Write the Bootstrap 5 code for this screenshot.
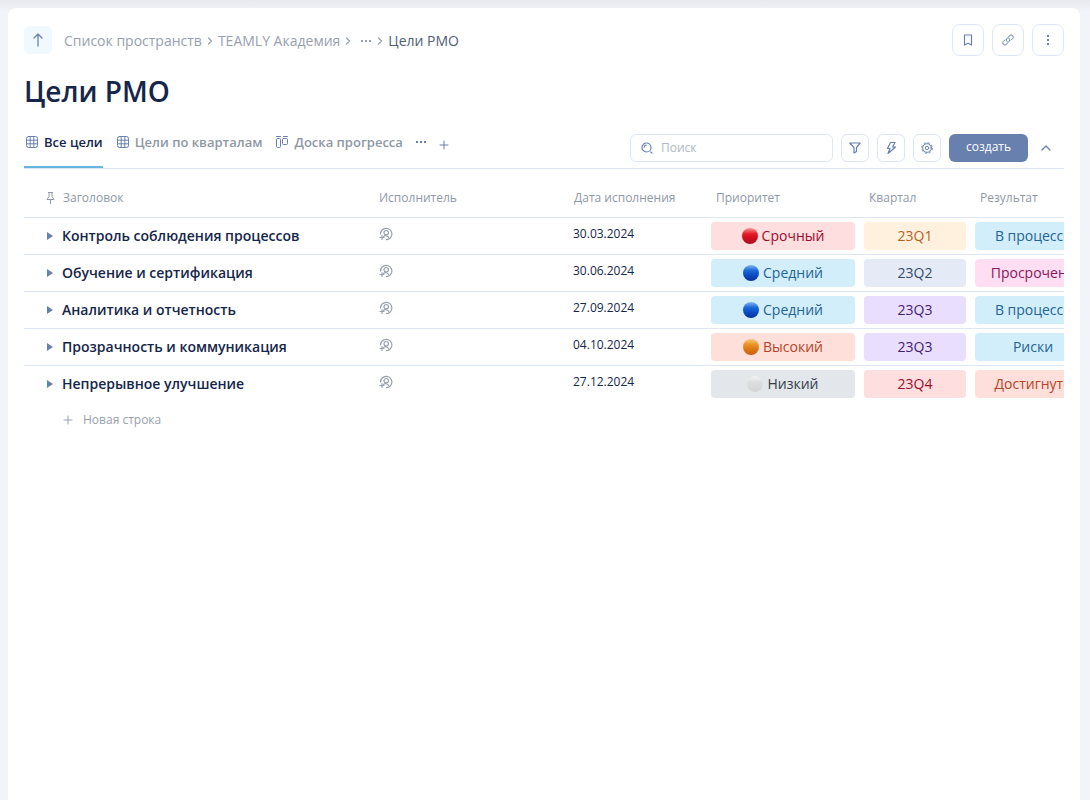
<!DOCTYPE html>
<html lang="ru">
<head>
<meta charset="utf-8">
<meta name="viewport" content="width=device-width, initial-scale=1">
<title>Цели РМО</title>
<link href="https://cdn.jsdelivr.net/npm/bootstrap@5.3.0/dist/css/bootstrap.min.css" rel="stylesheet">
<style>
  :root { --ink: #15264a; --muted-ink: #98a0ae; --accent: #6780ae; --line: #dce6f4; }
  body { background: #f3f4f9; font-family: "Open Sans", "Noto Sans", sans-serif; color: var(--ink); }
  .page-shell { padding: 8px 10px 0 8px; background: linear-gradient(#e8e9ee, #f3f4f9) 0 0 / 100% 12px no-repeat; }
  .sheet { background: #fff; border-radius: 8px 8px 0 0; padding: 16px; }
  svg { display: block; fill: none; stroke: currentColor; stroke-linecap: round; stroke-linejoin: round; flex: none; }
  .up-link { width: 28px; height: 28px; border-radius: 6px; background: #f0f9ff; }
  .crumbs { font-size: 14px; line-height: 20px; color: var(--muted-ink); }
  .crumbs a, .crumbs button { color: var(--muted-ink); text-decoration: none; }
  .crumbs a.up-link { color: var(--accent); }
  .crumb-row { padding-top: 2px; }
  .crumbs .here { color: #4f5d77; }
  .bare { border: 0; background: none; padding: 0; color: var(--accent); }
  .tool { border: 1px solid var(--line); background: #fff; color: var(--accent); padding: 0; width: 28px; height: 28px; border-radius: 6px; }
  .tool-lg { width: 32px; height: 32px; border-radius: 8px; }
  h1 { font-weight: 600; font-size: 28px; line-height: 38px; margin: 16px 0 18px; }
  .toolbar { border-bottom: 1px solid var(--line); height: 41px; }
  .views { gap: 12px; }
  .view-tab { gap: 6px; padding-left: 2px; font-size: 13px; line-height: 28px; font-weight: 600; color: #8f98a6; text-decoration: none; height: 40px; border-bottom: 2px solid transparent; }
  .view-tab.active { color: var(--ink); border-color: #66b5dd; }
  .view-tab svg { color: var(--accent); }
  .search-box { width: 203px; height: 28px; border: 1px solid var(--line); border-radius: 6px; padding: 0 10px; color: var(--accent); }
  .search-box input { border: 0; outline: 0; min-width: 0; padding: 0; font-size: 12px; line-height: 20px; color: var(--ink); }
  .search-box input::placeholder { color: #aeb7c3; opacity: 1; }
  .create { width: 79px; height: 28px; border: 0; border-radius: 6px; background: var(--accent); color: #fff; font-size: 12px; line-height: 20px; font-weight: 500; padding: 0 0 2px; }
  .goals { table-layout: fixed; width: 1072px; margin: 0; border-collapse: separate; border-spacing: 0; }
  .goals th, .goals td { padding: 0; vertical-align: middle; }
  .goals thead th { height: 49px; padding: 10px 9px 0; font-size: 12px; line-height: 18px; font-weight: 400; color: #8f98a6; border-bottom: 1px solid var(--line); }
  .goals tbody td, .goals tbody th { height: 37px; border-bottom: 1px solid var(--line); }
  .goals tbody tr:last-child > * { border-color: transparent; }
  .goals thead th:first-child, .goals tbody th { padding-left: 22px; }
  .goals tbody th { font-size: 14px; line-height: 20px; font-weight: 600; }
  .goals .who { padding: 0 9px 4px; color: #98a0ae; }
  .goals .due { padding: 0 8px 4px; font-size: 12px; line-height: 18px; }
  .goals .pick { padding: 0 5px 0 4px; }
  .pill { height: 28px; border-radius: 4px; font-size: 14px; line-height: 20px; display: flex; align-items: center; justify-content: center; gap: 4px; }
  .p-red { background: #ffdedf; color: #9d0b2c; }
  .p-blue { background: #d2eefb; color: #246491; }
  .p-coral { background: #ffdfda; color: #b54327; }
  .p-gray { background: #e3e7eb; color: #333f4a; }
  .p-cream { background: #fff1de; color: #b65f20; }
  .p-slate { background: #e4eaf6; color: #334a6b; }
  .p-violet { background: #e9defe; color: #432272; }
  .p-pink { background: #ffdef3; color: #8a1558; }
  .ball { width: 16px; height: 16px; border-radius: 50%; }
  .b-red { background: linear-gradient(#f69a95, #e5202c 35%, #d20e1e 60%, #a90f20); }
  .b-blue { background: linear-gradient(#80b5ee, #1c67d8 35%, #0d4fc8 60%, #0a2f9e); }
  .b-orange { background: linear-gradient(#f8c878, #ea9426 35%, #de7b14 60%, #c75e0e); }
  .b-white { background: linear-gradient(#f3f3f3, #dcdddf 40%, #d4d5d6); }
  .new-row { gap: 10px; font-size: 12px; line-height: 18px; color: #98a0ae; padding: 8px 0 0 39px; }
</style>
</head>
<body>
<svg width="0" height="0" class="position-absolute" aria-hidden="true">
  <symbol id="grid" viewBox="0 0 12 12"><rect x=".5" y=".5" width="11" height="11" rx="2"/><path d="M.5 4.2h11M.5 7.8h11M4.2.5v11M7.8.5v11"/></symbol>
  <symbol id="person" viewBox="0 0 14 14"><path d="M1.500 7A5.700 5.700 0 1 1 7.500 12.700M1 10.500h4M3 8.500v4" stroke-width="1.200"/><circle cx="7.200" cy="5.700" r="2.200" stroke-width="1.200"/><path d="M4.600 9.500C5.500 8.200 9 8.200 10 11.200" stroke-width="1.200"/></symbol>
  <symbol id="next" viewBox="0 0 8 8"><path d="M2.500 1l3 3-3 3" stroke-width="1.300"/></symbol>
  <symbol id="dots" viewBox="0 0 12 4"><path d="M1 1h2v2H1zM5 1h2v2H5zM9 1h2v2H9z" fill="currentColor" stroke="none"/></symbol>
  <symbol id="plus" viewBox="0 0 10 10"><path d="M5 1v8M1 5h8"/></symbol>
  <symbol id="open" viewBox="0 0 8 8"><path d="M1 0l6 4-6 4z" fill="currentColor" stroke="none"/></symbol>
</svg>
<div class="page-shell d-flex min-vh-100">
<main class="sheet flex-grow-1 overflow-hidden">
  <header class="d-flex align-items-center justify-content-between">
    <nav class="crumbs d-flex align-items-center" aria-label="Путь">
      <a href="#" class="up-link d-flex align-items-center justify-content-center me-2" aria-label="Вверх"><svg width="12" height="14" viewBox="0 0 12 14" stroke-width="1.3"><path d="M6 13V1M2 5l4-4 4 4"/></svg></a>
      <div class="crumb-row d-flex align-items-center ms-1">
      <a href="#">Список пространств</a>
      <svg class="mx-1" width="8" height="8"><use href="#next"/></svg>
      <a href="#">TEAMLY Академия</a>
      <svg class="ms-1" width="8" height="8"><use href="#next"/></svg>
      <button class="bare ms-1 px-1" aria-label="Ещё уровни"><svg width="12" height="4"><use href="#dots"/></svg></button>
      <svg class="me-1" width="8" height="8"><use href="#next"/></svg>
      <span class="here">Цели РМО</span>
      </div>
    </nav>
    <div class="d-flex gap-2">
      <button class="tool tool-lg d-flex align-items-center justify-content-center" aria-label="В закладки"><svg width="10" height="12" viewBox="0 0 10 12"><path d="M1.500 1h7v10L5 9.200 1.500 11z" stroke-width="1.200"/></svg></button>
      <button class="tool tool-lg d-flex align-items-center justify-content-center" aria-label="Ссылка"><svg width="12" height="12" viewBox="0 0 12 12"><path d="M5 7.600a2.200 2.200 0 0 1 0-3L7.600 1.600a2.100 2.100 0 0 1 3 3L9 6.200M7 4.400a2.200 2.200 0 0 1 0 3L4.400 10.400a2.100 2.100 0 0 1-3-3L3 5.800"/></svg></button>
      <button class="tool tool-lg d-flex align-items-center justify-content-center" aria-label="Меню"><svg width="2" height="10" viewBox="0 0 2 10"><path d="M0 0h2v2H0zM0 4h2v2H0zM0 8h2v2H0z" fill="currentColor" stroke="none"/></svg></button>
    </div>
  </header>

  <h1>Цели РМО</h1>

  <div class="toolbar d-flex justify-content-between">
    <nav class="views d-flex" aria-label="Представления">
      <a href="#" class="view-tab active d-flex" aria-current="page"><svg class="mt-2" width="12" height="12"><use href="#grid"/></svg>Все цели</a>
      <a href="#" class="view-tab d-flex"><svg class="mt-2" width="12" height="12"><use href="#grid"/></svg>Цели по кварталам</a>
      <a href="#" class="view-tab d-flex"><svg class="mt-2" width="12" height="12" viewBox="0 0 12 12"><path d="M.5.5h4M7.500.5h4"/><rect x=".5" y="2.500" width="4" height="9" rx="1"/><rect x="6.500" y="2.500" width="5" height="6" rx="1"/></svg>Доска прогресса</a>
      <button class="bare align-self-start mt-2 py-1" aria-label="Ещё"><svg width="12" height="4"><use href="#dots"/></svg></button>
      <button class="bare align-self-start mt-2 pt-1" aria-label="Добавить представление"><svg width="10" height="10"><use href="#plus"/></svg></button>
    </nav>
    <div class="d-flex gap-2 align-items-center">
      <label class="search-box d-flex align-items-center gap-2"><svg width="12" height="12" viewBox="0 0 12 12" stroke-width="1.200"><circle cx="5.500" cy="5.500" r="4.500"/><path d="M9.800 10l1.200 1.200M3.200 5.200a2.200 2.200 0 0 1 2-2"/></svg><input class="flex-grow-1" type="search" placeholder="Поиск" aria-label="Поиск"></label>
      <button class="tool d-flex align-items-center justify-content-center" aria-label="Фильтр"><svg width="12" height="12" viewBox="0 0 12 12" stroke-width="1.200"><path d="M.8 1h10.400L7.500 5.500v4L5 11V5.500z"/></svg></button>
      <button class="tool d-flex align-items-center justify-content-center" aria-label="Автоматизация"><svg width="12" height="14" viewBox="0 0 12 14" stroke-width="1.200"><path d="M5.500 1.500L2.500 7.500H5L3 12.500 10.500 6H7.500L10 1.500z"/></svg></button>
      <button class="tool d-flex align-items-center justify-content-center" aria-label="Настройки"><svg width="12" height="12" viewBox="0 0 12 12"><circle cx="6" cy="6" r="4.300"/><circle cx="6" cy="6" r="5.300" stroke-dasharray="2.160 2" stroke-linecap="butt"/><circle cx="6" cy="6" r="1.700"/></svg></button>
      <button class="create">создать</button>
      <button class="bare px-1 me-2" aria-label="Свернуть"><svg width="12" height="8" viewBox="0 0 12 8" stroke-width="1.300"><path d="M2 6l4-4 4 4"/></svg></button>
    </div>
  </div>

  <div class="overflow-hidden">
  <table class="goals">
    <colgroup><col style="width:346px"><col style="width:195px"><col style="width:142px"><col style="width:153px"><col style="width:111px"><col style="width:125px"></colgroup>
    <thead><tr>
      <th scope="col"><span class="d-flex align-items-center gap-2"><svg width="9" height="12" viewBox="0 0 9 12"><path d="M2.500.5h4M3 .5v4L1 7.500h7L6 4.500v-4M4.500 7.500v4"/></svg>Заголовок</span></th>
      <th scope="col">Исполнитель</th><th scope="col">Дата исполнения</th><th scope="col">Приоритет</th><th scope="col">Квартал</th><th scope="col">Результат</th>
    </tr></thead>
    <tbody>
      <tr><th scope="row"><span class="d-flex align-items-center gap-2"><button class="bare" aria-label="Развернуть"><svg width="8" height="8"><use href="#open"/></svg></button>Контроль соблюдения процессов</span></th><td class="who"><svg width="14" height="14"><use href="#person"/></svg></td><td class="due">30.03.2024</td><td class="pick"><span class="pill p-red"><i class="ball b-red"></i>Срочный</span></td><td class="pick"><span class="pill p-cream">23Q1</span></td><td class="pick"><span class="pill p-blue">В процессе</span></td></tr>
      <tr><th scope="row"><span class="d-flex align-items-center gap-2"><button class="bare" aria-label="Развернуть"><svg width="8" height="8"><use href="#open"/></svg></button>Обучение и сертификация</span></th><td class="who"><svg width="14" height="14"><use href="#person"/></svg></td><td class="due">30.06.2024</td><td class="pick"><span class="pill p-blue"><i class="ball b-blue"></i>Средний</span></td><td class="pick"><span class="pill p-slate">23Q2</span></td><td class="pick"><span class="pill p-pink">Просрочено</span></td></tr>
      <tr><th scope="row"><span class="d-flex align-items-center gap-2"><button class="bare" aria-label="Развернуть"><svg width="8" height="8"><use href="#open"/></svg></button>Аналитика и отчетность</span></th><td class="who"><svg width="14" height="14"><use href="#person"/></svg></td><td class="due">27.09.2024</td><td class="pick"><span class="pill p-blue"><i class="ball b-blue"></i>Средний</span></td><td class="pick"><span class="pill p-violet">23Q3</span></td><td class="pick"><span class="pill p-blue">В процессе</span></td></tr>
      <tr><th scope="row"><span class="d-flex align-items-center gap-2"><button class="bare" aria-label="Развернуть"><svg width="8" height="8"><use href="#open"/></svg></button>Прозрачность и коммуникация</span></th><td class="who"><svg width="14" height="14"><use href="#person"/></svg></td><td class="due">04.10.2024</td><td class="pick"><span class="pill p-coral"><i class="ball b-orange"></i>Высокий</span></td><td class="pick"><span class="pill p-violet">23Q3</span></td><td class="pick"><span class="pill p-blue">Риски</span></td></tr>
      <tr><th scope="row"><span class="d-flex align-items-center gap-2"><button class="bare" aria-label="Развернуть"><svg width="8" height="8"><use href="#open"/></svg></button>Непрерывное улучшение</span></th><td class="who"><svg width="14" height="14"><use href="#person"/></svg></td><td class="due">27.12.2024</td><td class="pick"><span class="pill p-gray"><i class="ball b-white"></i>Низкий</span></td><td class="pick"><span class="pill p-red">23Q4</span></td><td class="pick"><span class="pill p-coral">Достигнуто</span></td></tr>
    </tbody>
  </table>
  </div>
  <button class="bare new-row d-flex align-items-center"><svg width="10" height="10"><use href="#plus"/></svg>Новая строка</button>
</main>
</div>
<script src="https://cdn.jsdelivr.net/npm/bootstrap@5.3.0/dist/js/bootstrap.bundle.min.js"></script>
</body>
</html>
